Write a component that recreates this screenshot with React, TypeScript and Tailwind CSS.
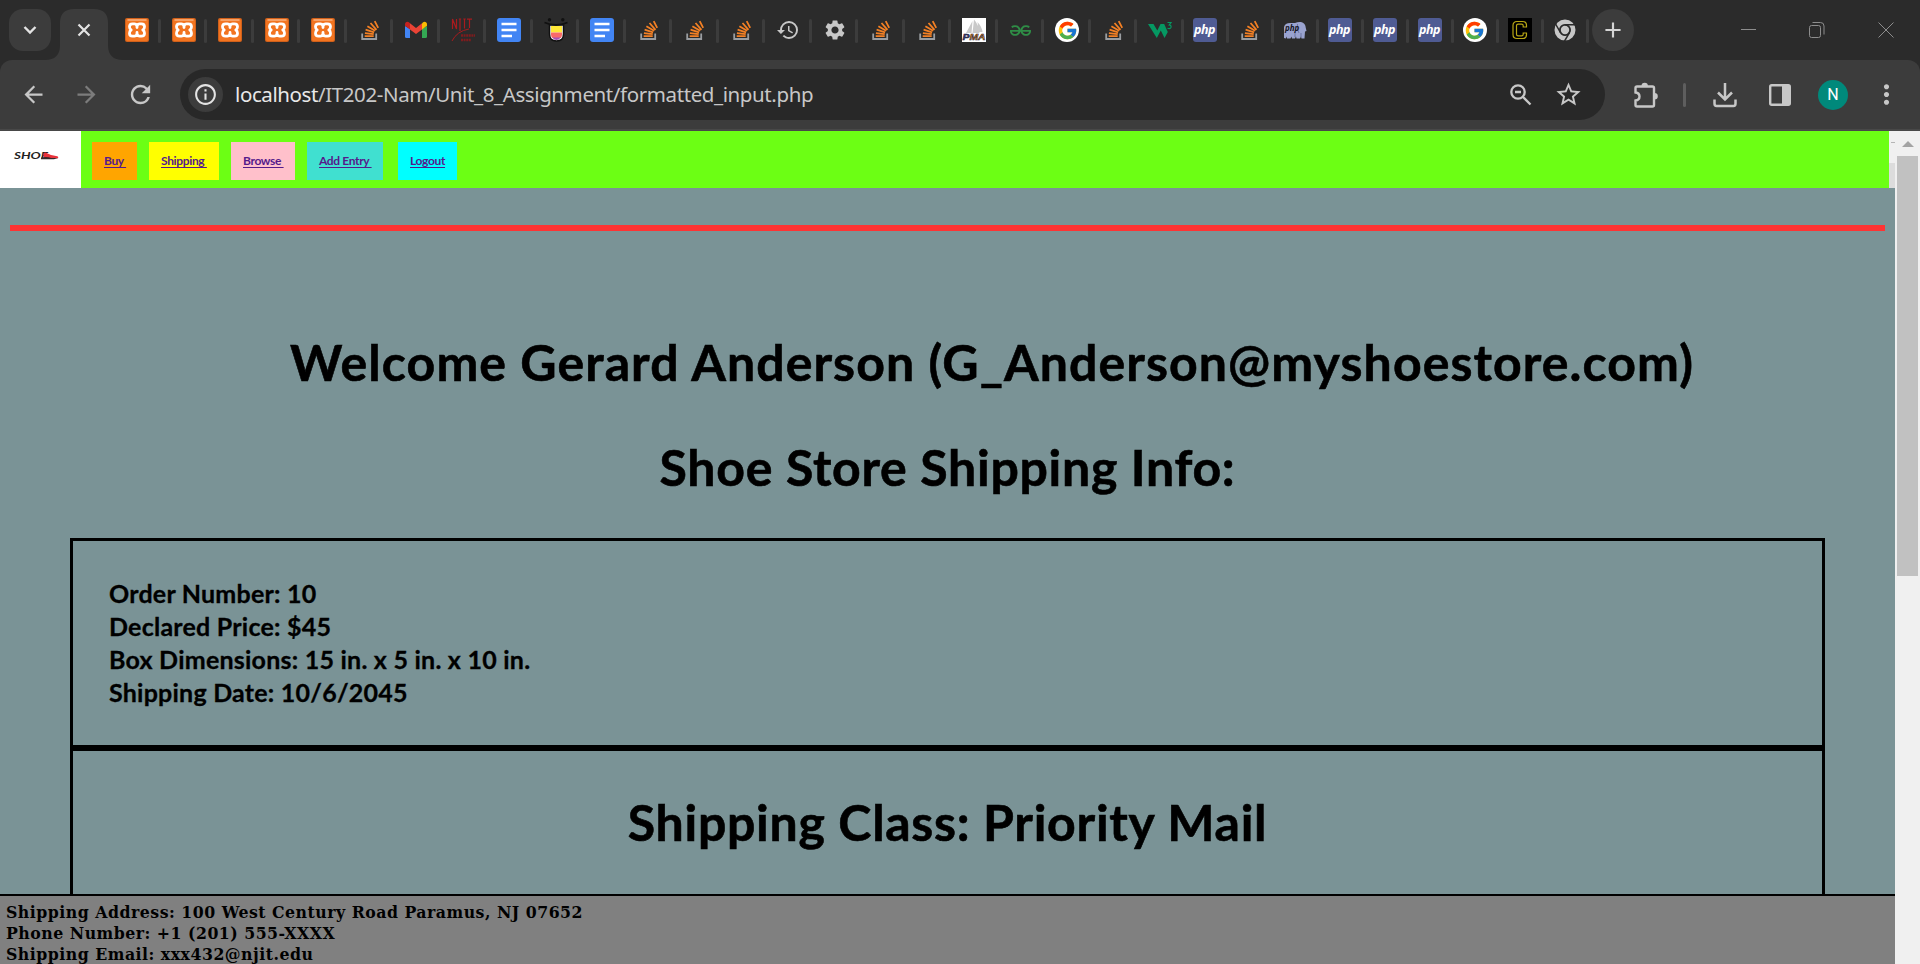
import React from "react";
import { FcGoogle } from "react-icons/fc";
import { SiGeeksforgeeks } from "react-icons/si";
import {
  MdHistory,
  MdSettings,
  MdArrowBack,
  MdArrowForward,
  MdRefresh,
  MdInfoOutline,
  MdStarOutline,
  MdMoreVert,
  MdAdd,
} from "react-icons/md";

function Xampp() {
  return (
    <svg viewBox="0 0 24 24" className="size-6">
      <rect width="24" height="24" rx="2" fill="#d0601a" />
      <rect x="1" y="1" width="22" height="22" rx="1.500" fill="#f27420" />
      <path d="M2.500 2h19" stroke="#fbd0ae" strokeWidth="1" />
      <path
        d="M7.500 5.800h2q1.500 0 2.500 1.700 1-1.700 2.500-1.700h2q3 0 3 3 0 2.200-1.700 3.200 1.700 1 1.700 3.200 0 3-3 3h-2q-1.500 0-2.500-1.700-1 1.700-2.500 1.700h-2q-3 0-3-3 0-2.200 1.700-3.200-1.700-1-1.700-3.200 0-3 3-3z"
        fill="#f27420"
        stroke="#fff"
        strokeWidth="2.800"
        strokeLinejoin="round"
      />
      <path d="M12 7v2.500M12 14.500V17" stroke="#fff" strokeWidth="2.800" strokeLinecap="round" />
    </svg>
  );
}

function StackOverflow() {
  return (
    <svg viewBox="0 0 24 24" className="size-6" fill="none">
      <path d="M4.200 15.500v5.500h14v-5.500" stroke="#9a9da1" strokeWidth="1.800" />
      <path
        d="M6.700 18.200h9M6.900 15.100l8.800 1M7.600 11.700l8.500 2.600M9.400 8.200l7.700 4.600M12.500 5l6 6.800M16.700 3.200l3.500 6.600"
        stroke="#f48024"
        strokeWidth="1.800"
      />
    </svg>
  );
}

function Gmail() {
  return (
    <svg viewBox="0 0 24 24" className="size-6">
      <path d="M1 8v10.500a1.500 1.500 0 0 0 1.500 1.500H6v-9z" fill="#4285f4" />
      <path d="M18 11v9h3.500a1.500 1.500 0 0 0 1.500-1.500V8z" fill="#34a853" />
      <path d="M18 5.500V11.500L23 7.700V6.200C23 3.900 20.400 3 18.800 4.500z" fill="#fbbc04" />
      <path d="M1 6.200v1.500l5 3.800V5.300l-.8-.8C3.500 3 1 3.900 1 6.200z" fill="#c5221f" />
      <path d="M6 11.500V5.300l6 4.700 6-4.700v6.200L12 16z" fill="#ea4335" />
    </svg>
  );
}

function Njit() {
  return (
    <svg viewBox="0 0 24 24" className="size-6">
      <path
        d="M1.500 11V1l4 10V1M9 1v12M7.800 1h2.400M13.500 1v9.500M12.300 1h2.400M16 1.200h5M18.500 1v9"
        fill="none"
        stroke="#a81b1e"
        strokeWidth="1.200"
      />
      <path d="M1 23Q6 13 18 11" fill="none" stroke="#a81b1e" strokeWidth="1" />
      <path d="M10 17.500h14M10 22h10" stroke="#7d1c1e" strokeWidth="2.400" strokeDasharray="2 .6" />
    </svg>
  );
}

function Docs() {
  return (
    <svg viewBox="0 0 24 24" className="size-6">
      <rect width="24" height="24" rx="3" fill="#4285f4" />
      <path d="M4.500 6h15M4.500 12h15M4.500 18h10.500" stroke="#fff" strokeWidth="2.400" />
    </svg>
  );
}

function Tongue() {
  return (
    <svg viewBox="0 0 24 24" className="size-6">
      <circle cx="5.500" cy="1.700" r="1.700" fill="#111" />
      <circle cx="18.800" cy="1.700" r="1.700" fill="#111" />
      <path d="M5.500 7h14v9q0 7-7 7t-7-7z" fill="#fff" stroke="#111" strokeWidth="1.500" />
      <path d="M7 8h11v6.500H7z" fill="#ffe838" />
      <path d="M7 14.500h11v2q0 2-1.300 3.500H8.300Q7 18.500 7 16.500z" fill="#f96a6a" />
      <path d="M8.300 19.500h8.400Q15 22 12.500 22t-4.200-2.500z" fill="#a655b5" />
      <path d="M.5 4.500Q12 9.500 23.500 4.500" fill="none" stroke="#111" strokeWidth="1.800" />
    </svg>
  );
}

function PhpMyAdmin() {
  return (
    <svg viewBox="0 0 24 24" className="size-6">
      <rect width="24" height="24" fill="#fff" />
      <path d="M4 15L10.500 3 9.500 15zM10.500 15L12 1.500Q17 7 17.500 15zM17 14L15.500 4Q20 9 20.500 14z" fill="#c9c9c9" />
      <text x="0.500" y="22" fontSize="9" textLength="23" lengthAdjust="spacingAndGlyphs" fontWeight="900" fontStyle="italic" fontFamily="Liberation Sans, sans-serif" fill="#f29111" stroke="#22223a" strokeWidth=".5">
        <tspan fill="#3a3a70">P</tspan>MA
      </text>
    </svg>
  );
}

function Google() {
  return (
    <span className="flex size-6 items-center justify-center rounded-full bg-white">
      <FcGoogle className="size-[21px]" />
    </span>
  );
}

function W3() {
  return (
    <svg viewBox="0 0 24 24" className="size-6">
      <path d="M0 6h5.500l3.800 6.500L12.500 6h3.700l3.600 8L16.500 20 12.800 12.500 8.800 20z" fill="#059862" />
      <path d="M19.500 4.500h3.500l-1.800 2.500q2.200.2 1.800 2.400-.6 1.800-3.500.9" fill="none" stroke="#059862" strokeWidth="1.200" />
    </svg>
  );
}

function Php() {
  return (
    <span className="flex size-6 items-center justify-center rounded-[3px] bg-[#4f5b93]">
      <span className="font-['Open_Sans',sans-serif] text-[12.500px] leading-none font-bold tracking-[-0.400px] text-white italic">
        php
      </span>
    </span>
  );
}

function Elephant() {
  return (
    <svg viewBox="0 0 24 24" className="size-6">
      <path
        d="M1 20V9q1-4 6-4h5q3-1.500 6-1 4.500 1 4.800 6l.7 3-1.500.5-.5 7h-3l-.5-2-1 2h-3.500l-.5-2-1 2H9l-.5-2-1 2H4l-.5-2-.7 2z"
        fill="#9aa3cf"
      />
      <path d="M14.500 6q-1 6 1.500 9M18 15v4M12 14v5" fill="none" stroke="#59628f" strokeWidth=".7" />
      <text x="2" y="12.500" fontSize="8" fontWeight="700" fontStyle="italic" fontFamily="Open Sans, sans-serif" fill="#15151f">
        php
      </text>
    </svg>
  );
}

function LetterC() {
  return (
    <svg viewBox="0 0 24 24" className="size-6">
      <rect width="24" height="24" fill="#000" />
      <path
        d="M18.500 9V7.500Q18.500 3.500 14.500 3.500H9Q5 3.500 5 7.500v9Q5 20.500 9 20.500h5.500q4 0 4-4V15h-3.300v1.200q0 1.600-1.600 1.600h-3.400q-1.700 0-1.700-1.600V7.800q0-1.600 1.700-1.600h3.400q1.600 0 1.600 1.600V9z"
        fill="none"
        stroke="#b8a614"
        strokeWidth="1.200"
      />
    </svg>
  );
}

function Chrome() {
  return (
    <svg viewBox="0 0 24 24" className="size-6" fill="none">
      <circle cx="12" cy="12" r="8" stroke="#c7c7c7" strokeWidth="5" />
      <circle cx="12" cy="12" r="5.200" stroke="#2b2b2b" strokeWidth="1.500" />
      <circle cx="12" cy="12" r="4.200" fill="#c7c7c7" />
      <path d="M12 6.800h11M7.500 14.600L2 5M16.500 14.600L11 24" stroke="#2b2b2b" strokeWidth="1.500" />
    </svg>
  );
}

const History = () => <MdHistory className="size-6 text-[#c7c7c7]" />;
const Gear = () => <MdSettings className="size-6 text-[#c7c7c7]" />;
const Gfg = () => <SiGeeksforgeeks className="size-[21px] text-[#2f8d46]" />;

const wideTabs = [
  Xampp, Xampp, Xampp, Xampp, Xampp, StackOverflow, Gmail, Njit, Docs, Tongue, Docs,
  StackOverflow, StackOverflow, StackOverflow, History, Gear, StackOverflow, StackOverflow,
  PhpMyAdmin, Gfg, Google, StackOverflow, W3,
];
const narrowTabs = [Php, StackOverflow, Elephant, Php, Php, Php, Google, LetterC, Chrome];

function Tab({ icon: Icon, narrow }: { icon: React.ComponentType; narrow?: boolean }) {
  return (
    <div className={narrow ? "flex h-6 w-[45px] shrink-0 items-center pl-[9px]" : "flex h-6 w-[46.5px] shrink-0 items-center pl-[11px]"}>
      <span className="flex size-6 items-center justify-center">
        <Icon />
      </span>
      <span className="mt-0.5 ml-auto h-6 w-[3px] rounded-sm bg-[#3c3c3c]" />
    </div>
  );
}

function TabStrip() {
  return (
    <div className="flex h-[60px] items-center bg-[#2b2b2b]">
      <div className="ml-[9px] flex size-[42px] items-center justify-center rounded-[14px] bg-[#3c3c3c]">
        <svg viewBox="0 0 14 10" className="h-[10px] w-[14px]" fill="none" stroke="#e3e3e3" strokeWidth="2.400">
          <path d="M1.500 2L7 7.500 12.500 2" />
        </svg>
      </div>
      <svg viewBox="0 0 78 51" className="-ml-[6px] h-[51px] w-[78px] self-end">
        <path d="M0 51Q15 51 15 36V14Q15 0 29 0H49Q63 0 63 14V36Q63 51 78 51z" fill="#3c3c3c" />
        <path d="M33.500 15.500l11 11M44.500 15.500l-11 11" stroke="#e3e3e3" strokeWidth="2.200" />
      </svg>
      <div className="-ml-[9px] flex items-center">
        {wideTabs.map((icon, i) => (
          <Tab key={i} icon={icon} />
        ))}
        {narrowTabs.map((icon, i) => (
          <Tab key={i} icon={icon} narrow />
        ))}
      </div>
      <div className="ml-[3px] flex size-[42px] items-center justify-center rounded-full bg-[#3c3c3c]">
        <MdAdd className="size-[26px] text-[#d5d5d5]" />
      </div>
      <svg viewBox="0 0 154 18" className="mr-[26px] ml-auto h-[18px] w-[154px]" fill="none" stroke="#8d8d8d">
        <path d="M1 8.500h15M138.500 1.500l15 15M153.500 1.500l-15 15" />
        <rect x="69.500" y="4.500" width="11" height="12" rx="2" />
        <path d="M72.500 1.500h8q3.500 0 3.500 3.500v8.500" />
      </svg>
    </div>
  );
}

function Toolbar() {
  return (
    <div className="bg-[#2b2b2b]">
      <div className="flex h-[71px] items-center rounded-t-[12px] border-b-2 border-[#484848] bg-[#3c3c3c] text-[#c7c7c7]">
        <MdArrowBack className="ml-[20px] size-[27px]" />
        <MdArrowForward className="ml-[26px] size-[27px] text-[#7c7c7c]" />
        <MdRefresh className="ml-[26px] size-[29px]" />
        <div className="ml-[25px] flex h-[51px] w-[1425px] items-center rounded-full bg-[#282828] pl-2">
          <div className="flex size-[35px] items-center justify-center rounded-full bg-[#3c3c3c]">
            <MdInfoOutline className="size-[25px] text-[#e3e3e3]" />
          </div>
          <span className="ml-3 font-['Noto_Sans',sans-serif] text-[20.500px] tracking-[-0.400px] whitespace-nowrap text-[#c7c7c7]">
            <span className="text-[#e8e8e8]">localhost</span>/IT202-Nam/Unit_8_Assignment/formatted_input.php
          </span>
          <svg viewBox="0 0 24 24" className="ml-auto size-6" fill="none" stroke="#c7c7c7" strokeWidth="2.300">
            <circle cx="8" cy="9" r="6.700" />
            <path d="M13 14l7.500 7.500M5 9h6" />
          </svg>
          <MdStarOutline className="mr-[22px] ml-[20px] size-[29px]" />
        </div>
        <svg viewBox="0 0 26 26" className="ml-[28px] size-[26px]">
          <path
            d="M4 4.500h15.500q1.500 0 1.500 1.500v17q0 1.500-1.500 1.500H4q-1.500 0-1.500-1.500v-4.500q4-.5 4-4t-4-4V6q0-1.500 1.500-1.500z"
            fill="none"
            stroke="#c7c7c7"
            strokeWidth="2.400"
          />
          <path d="M8.500 4a3.200 3.200 0 0 1 6.400 0zM21.500 11a3.300 3.300 0 0 1 0 6.600z" fill="#c7c7c7" />
        </svg>
        <span className="ml-[24px] h-6 w-[3px] rounded-sm bg-[#5e5e5e]" />
        <svg viewBox="0 0 24 26" className="ml-[27px] h-[26px] w-6" fill="none" stroke="#c7c7c7" strokeWidth="2.500">
          <path d="M12 1v16M5 10.500l7 7 7-7M1.500 17.500v4q0 2.500 2 2.500h17q2 0 2-2.500v-4" />
        </svg>
        <svg viewBox="0 0 22 22" className="ml-8 size-[22px]">
          <rect x="1.200" y="1.200" width="19.600" height="19.600" rx="1.500" fill="none" stroke="#c7c7c7" strokeWidth="2.400" />
          <path d="M13 1h8v20h-8z" fill="#c7c7c7" />
        </svg>
        <span className="ml-[27px] flex size-[30px] items-center justify-center rounded-full bg-[#00897b] font-['Roboto',sans-serif] text-[16px] text-white">
          N
        </span>
        <MdMoreVert className="ml-[23px] size-[31px]" />
      </div>
    </div>
  );
}

function Logo() {
  return (
    <div className="flex h-[57px] w-[81px] bg-white pt-[20px] pl-[13px]">
      <svg viewBox="0 0 48 16" className="h-4 w-12">
        <text x="1" y="7.800" fontSize="9.500" textLength="34" lengthAdjust="spacingAndGlyphs" fontWeight="700" fontStyle="italic" fontFamily="Lato, sans-serif" fill="#222">
          SHOE
        </text>
        <path d="M31 7q-2-5.500 1.500-5.500l5.500 2.500 5 1q3 .3 2 2.300H33z" fill="#e8323a" />
        <path d="M28 6.500q7-1 10 .5h7l-4 1.200H28z" fill="#33282b" />
      </svg>
    </div>
  );
}

const links = [
  { label: "Buy ", box: "w-[45px] bg-[#ffa500]" },
  { label: "Shipping ", box: "ml-3 w-[70px] bg-[#ffff00]" },
  { label: "Browse ", box: "ml-3 w-16 bg-[#ffc0cb]" },
  { label: "Add Entry ", box: "ml-3 w-[76px] bg-[#40e0d0]" },
  { label: "Logout", box: "ml-[15px] w-[59px] bg-[#00ffff]" },
];

function Nav() {
  return (
    <div className="flex h-[57px]">
      <Logo />
      <nav className="flex w-[1808px] bg-[#6cff14] pt-[11px] pl-[11px]">
        {links.map((l) => (
          <div key={l.label} className={`flex h-[38px] shrink-0 items-center pl-3 ${l.box}`}>
            <a className="font-['Lato',sans-serif] text-[12px] font-bold tracking-[-0.350px] whitespace-pre text-[#551a8b] underline underline-offset-2">
              {l.label}
            </a>
          </div>
        ))}
      </nav>
      <div className="flex w-[6px] flex-col bg-[#f0f0f0] pt-[11px] pl-0.5">
        <span className="h-px w-1 bg-[#b5b5b5]" />
        <span className="mt-auto -ml-0.5 h-[25px] w-[6px] bg-[#dcdcdc]" />
      </div>
    </div>
  );
}

function Page() {
  return (
    <div className="flex h-[833px] w-[1895px] flex-col bg-[#7a9396] font-['Lato',sans-serif] font-bold text-black">
      <Nav />
      <div className="mt-[37px] ml-[10px] h-[6px] w-[1875px] shrink-0 bg-[#ff3333]" />
      <h1 className="mt-[102px] h-[58px] pl-[290px] text-[50px] leading-[58px] tracking-[1.080px] whitespace-nowrap [-webkit-text-stroke:0.6px_black]">
        Welcome Gerard Anderson (G_Anderson@myshoestore.com)
      </h1>
      <h1 className="mt-[47px] h-[58px] text-center text-[50px] leading-[58px] tracking-[0.700px] whitespace-nowrap [-webkit-text-stroke:0.6px_black]">
        Shoe Store Shipping Info:
      </h1>
      <div className="mt-[42px] ml-[70px] flex min-h-0 w-[1755px] flex-1 flex-col border-x-[3px] border-t-[3px] border-black">
        <div className="h-[204px] shrink-0 pt-[36px] pl-[36px] text-[25px] leading-[33px] tracking-[0.230px] [-webkit-text-stroke:0.3px_black]">
          <p>Order Number: 10</p>
          <p>Declared Price: $45</p>
          <p>Box Dimensions: 15 in. x 5 in. x 10 in.</p>
          <p>Shipping Date: 10/6/2045</p>
        </div>
        <div className="h-[6px] shrink-0 bg-black" />
        <h1 className="mt-[42px] text-center text-[50px] leading-[58px] tracking-[0.700px] whitespace-nowrap [-webkit-text-stroke:0.6px_black]">
          Shipping Class: Priority Mail
        </h1>
      </div>
      <footer className="h-[70px] shrink-0 overflow-hidden border-t-2 border-black bg-[#808080] pt-[6px] pl-[6px] font-['DejaVu_Serif_Condensed','DejaVu_Serif',serif] text-[17.500px] leading-[21px] tracking-[0.500px] whitespace-nowrap">
        <p>Shipping Address: 100 West Century Road Paramus, NJ 07652</p>
        <p>Phone Number: +1 (201) 555-XXXX</p>
        <p>Shipping Email: xxx432@njit.edu</p>
      </footer>
    </div>
  );
}

function Scrollbar() {
  return (
    <div className="flex h-[833px] w-[25px] flex-col items-center bg-[#f0f0f0] pt-[10px]">
      <svg viewBox="0 0 12 6" className="h-[6px] w-3">
        <path d="M6 0l6 6H0z" fill="#a3a3a3" />
      </svg>
      <span className="mt-[9px] h-[420px] w-[21px] bg-[#c1c1c1]" />
    </div>
  );
}

export default function App() {
  return (
    <div className="h-[964px] w-[1920px] overflow-hidden">
      <TabStrip />
      <Toolbar />
      <div className="flex">
        <Page />
        <Scrollbar />
      </div>
    </div>
  );
}
